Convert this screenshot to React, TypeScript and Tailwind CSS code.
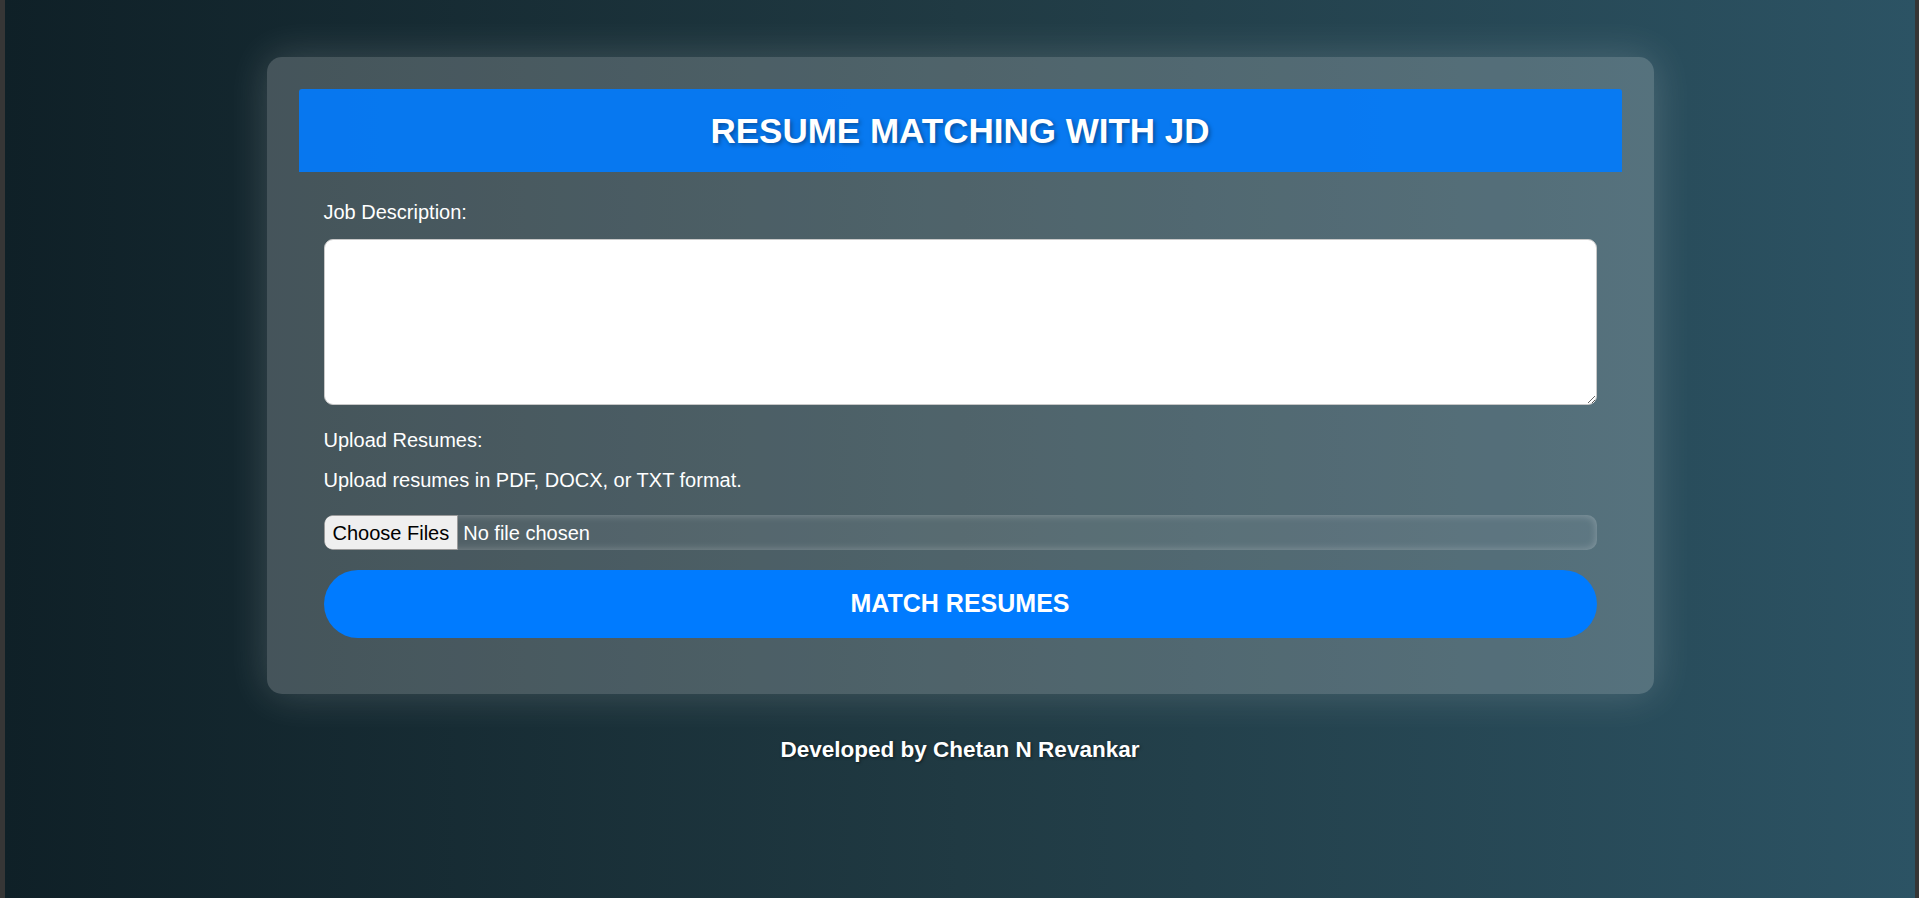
import React from "react";

const font = { fontFamily: '"Liberation Sans", Arial, Helvetica, sans-serif' };

export default function App() {
  return (
    <div
      className="flex min-h-screen w-full bg-[#333333] text-white"
      style={font}
    >
      <div className="w-[5px] shrink-0 bg-[#363636]" />
      <main className="flex min-h-screen flex-1 flex-col items-center bg-gradient-to-r from-[#0f2027] via-[#203a43] to-[#2c5364]">
        <section className="mt-[57px] w-[1387px] rounded-[15px] bg-white/[0.21] p-8 shadow-[0_0_40px_rgba(255,255,255,0.18)]">
          <header className="flex h-[83px] items-center justify-center rounded-t-[3px] bg-[#007bff]/90">
            <h1 className="text-[35px] font-bold leading-[40px] [text-shadow:2px_2px_4px_rgba(0,0,0,0.35)]">
              RESUME MATCHING WITH JD
            </h1>
          </header>

          <form
            className="flex flex-col px-[25px] pt-[29px] pb-[24px]"
            onSubmit={(e) => e.preventDefault()}
          >
            <label htmlFor="jd" className="text-[20px] leading-[23px]">
              Job Description:
            </label>
            <textarea
              id="jd"
              className="mt-[15px] h-[166px] w-full rounded-[9px] border border-[#c8c8c8] bg-white p-[10px] text-[16px] text-black outline-none"
            />

            <label htmlFor="resumes" className="mt-[24px] text-[20px] leading-[23px]">
              Upload Resumes:
            </label>
            <p className="mt-[17px] text-[20px] leading-[23px]">
              Upload resumes in PDF, DOCX, or TXT format.
            </p>
            <input
              id="resumes"
              type="file"
              multiple
              className="mt-[23px] h-[35px] w-full rounded-[10px] bg-white/[0.05] text-[20px] leading-[35px] text-white shadow-[inset_0_0_8px_rgba(255,255,255,0.28)] file:mr-[5px] file:h-[35px] file:rounded-l-[8px] file:border file:border-[#9a9a9a] file:bg-[#efefef] file:px-[8px] file:text-[20px] file:text-black"
              style={font}
            />

            <button
              type="submit"
              className="mt-[20px] h-[68px] w-full rounded-full bg-[#007bff] text-[25px] font-bold text-white"
            >
              MATCH RESUMES
            </button>
          </form>
        </section>

        <footer className="mt-[43px] text-[22.5px] font-bold leading-[26px] [text-shadow:1px_1px_3px_rgba(0,0,0,0.5)]">
          Developed by Chetan N Revankar
        </footer>
      </main>
      <div className="w-[4px] shrink-0 bg-[#363636]" />
    </div>
  );
}
